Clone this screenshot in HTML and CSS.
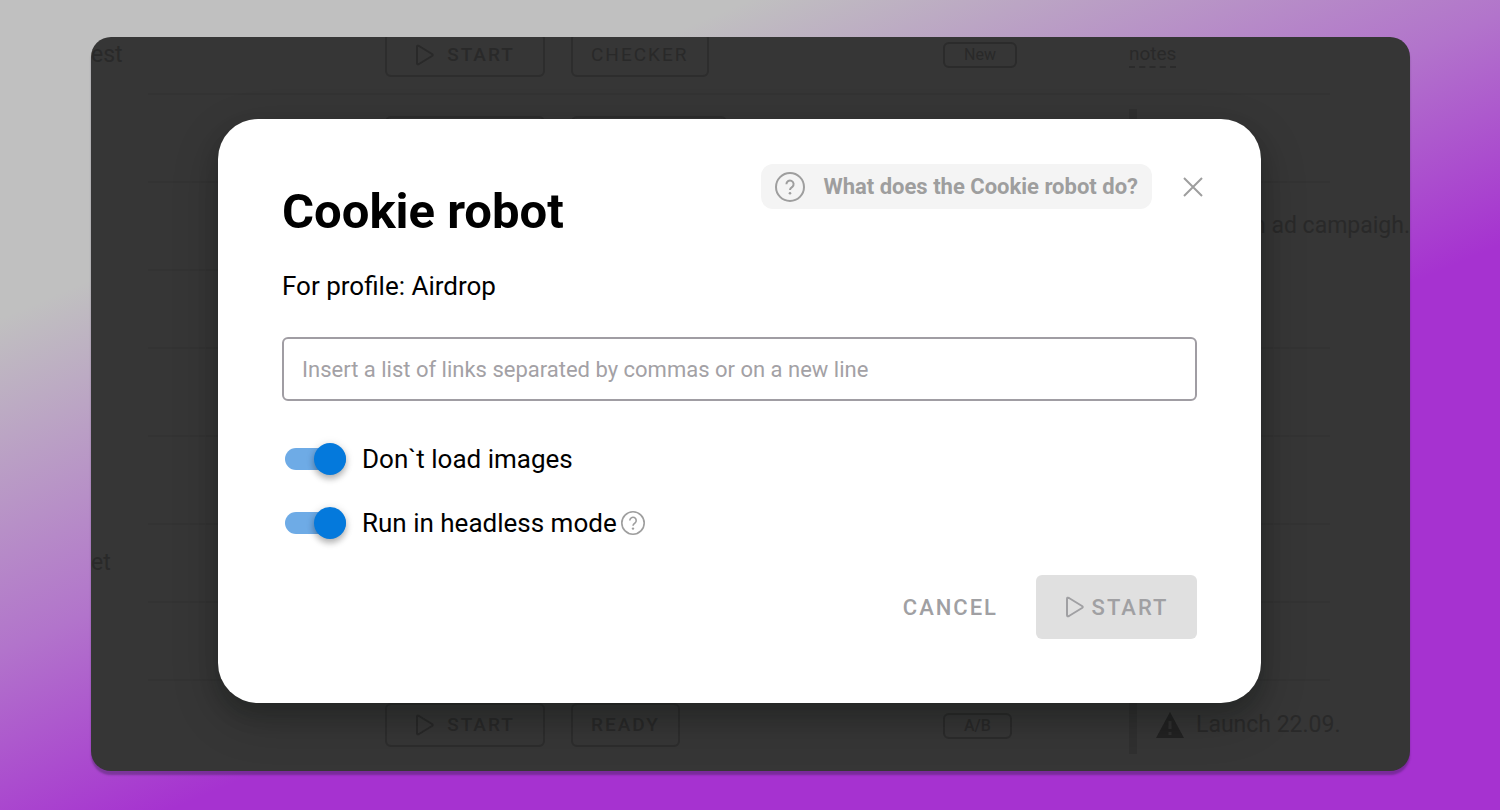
FILE: index.html
```html
<!DOCTYPE html>
<html lang="en">
<head>
<meta charset="utf-8">
<meta name="viewport" content="width=device-width, initial-scale=1">
<title>Cookie robot</title>
<link rel="stylesheet" href="styles.css">
</head>
<body>
<main class="window">
  <table class="profiles" aria-label="Profiles">
    <colgroup><col class="col-name"><col class="col-actions"><col class="col-tag"><col class="col-notes"><col class="col-end"></colgroup>
    <tbody>
      <tr class="short">
        <td>est</td>
        <td class="actions"><div class="pair">
          <span class="ghost ghost-start"><svg class="play" viewBox="0 0 20 22" aria-hidden="true"><path d="M2 3v16q0 2 2 1l13-8q1.500-1 0-2L4 2Q2 1 2 3z"/></svg>START</span>
          <span class="ghost thin">CHECKER</span></div></td>
        <td><span class="tag">New</span></td>
        <td><span class="notes-link">notes</span></td>
        <td></td>
      </tr>
      <tr>
        <td></td>
        <td class="actions"><div class="pair"><span class="ghost ghost-start"></span><span class="ghost ghost-wide"></span></div></td>
        <td></td>
        <td><div class="note"></div></td>
        <td></td>
      </tr>
      <tr>
        <td></td><td></td><td></td>
        <td colspan="2" class="campaign">n ad campaigh.</td>
      </tr>
      <tr class="short"><td></td><td></td><td></td><td></td><td></td></tr>
      <tr><td></td><td></td><td></td><td></td><td></td></tr>
      <tr><td></td><td></td><td></td><td></td><td></td></tr>
      <tr class="short"><td>et</td><td></td><td></td><td></td><td></td></tr>
      <tr class="short"><td></td><td></td><td></td><td></td><td></td></tr>
      <tr class="last">
        <td></td>
        <td class="actions"><div class="pair">
          <span class="ghost ghost-start"><svg class="play" viewBox="0 0 20 22" aria-hidden="true"><path d="M2 3v16q0 2 2 1l13-8q1.500-1 0-2L4 2Q2 1 2 3z"/></svg>START</span>
          <span class="ghost">READY</span></div></td>
        <td><span class="tag bold">A/B</span></td>
        <td><div class="note"><svg class="warning" viewBox="0 0 28 28" aria-hidden="true"><path d="M14 1L28 27H0z"/><path class="mark" d="M14 10v8M14 21v3"/></svg>Launch 22.09.</div></td>
        <td></td>
      </tr>
    </tbody>
  </table>

  <div class="overlay">
    <form class="dialog" role="dialog" aria-labelledby="title">
      <header class="head">
        <h1 id="title">Cookie robot</h1>
        <button type="button" class="help">
          <svg class="help-icon" viewBox="0 0 30 30" aria-hidden="true"><circle cx="15" cy="15" r="14"/><path d="M11.400 12.200a3.600 3.600 0 1 1 5.900 2.700c-1.400 1-2.300 1.500-2.300 3.100"/><circle class="dot" cx="15" cy="21.200" r="1.300"/></svg>
          What does the Cookie robot do?
        </button>
        <button type="button" class="close" aria-label="Close"><svg viewBox="0 0 20 20" aria-hidden="true"><path d="M1 1l18 18M19 1L1 19"/></svg></button>
      </header>
      <p class="profile">For profile: Airdrop</p>
      <input class="links" type="text" aria-label="Links" placeholder="Insert a list of links separated by commas or on a new line">
      <div class="options">
        <div class="option">
          <input class="switch" type="checkbox" id="images" checked>
          <label for="images">Don`t load images</label>
        </div>
        <div class="option">
          <input class="switch" type="checkbox" id="headless" checked>
          <label for="headless">Run in headless mode</label>
          <svg class="hint" viewBox="0 0 30 30" aria-hidden="true"><circle cx="15" cy="15" r="14"/><path d="M11 12a4 4 0 1 1 6.500 3c-1.500 1-2.500 1.700-2.500 3.500"/><circle class="dot" cx="15" cy="22" r="1.500"/></svg>
        </div>
      </div>
      <footer class="foot">
        <button type="button" class="cancel">CANCEL</button>
        <button type="submit" class="start" disabled><svg class="play" viewBox="0 0 20 22" aria-hidden="true"><path d="M2 3v16q0 2 2 1l13-8q1.500-1 0-2L4 2Q2 1 2 3z"/></svg>START</button>
      </footer>
    </form>
  </div>
</main>
</body>
</html>
```
FILE: styles.css
```css
* { box-sizing: border-box; }

body {
  margin: 0;
  min-height: 100vh;
  display: grid;
  padding: 37px 6% 39px;
  padding-left: 91px;
  font-family: Roboto, "Liberation Sans", sans-serif;
  font-size: 26px;
  color: #000;
  background: linear-gradient(157deg, #c0c0c0 22%, #b274cb 45%, #a632d0 61%);
}

button, input { font: inherit; }
svg { fill: none; stroke: currentColor; flex: none; }

.window {
  display: grid;
  overflow: hidden;
  border-radius: 20px;
  background: #363636;
  box-shadow: 0 4px 2px rgba(40, 30, 60, 0.35);
}

.profiles, .overlay { grid-area: 1 / 1; min-width: 0; }

/* Profile list, dimmed behind the dialog */
.profiles {
  width: 100%;
  margin-top: -21px;
  table-layout: fixed;
  border-collapse: collapse;
  color: #292929;
  font-size: 23px;
  line-height: 32px;
  white-space: nowrap;
}
.col-name { width: 57px; }
.col-tag { width: 186px; }
.col-notes { width: 201px; }
.col-end { width: 80px; }
.profiles tr { height: 88px; }
.profiles .short { height: 78px; }
.profiles .last { height: 90px; }
.profiles td { padding: 0; border-bottom: 2px solid #333; }
.profiles td:first-child, .profiles td:last-child, .profiles .last td { border-bottom-color: transparent; }
.profiles .actions { padding-left: 237px; }
.profiles .campaign { text-align: right; }

.pair { display: flex; gap: 26px; }
.ghost {
  display: flex;
  align-items: center;
  justify-content: center;
  height: 44px;
  padding: 0 18px;
  border: 2px solid #2d2d2d;
  border-radius: 6px;
  font-size: 19px;
  font-weight: 500;
  letter-spacing: 2px;
}
.ghost.thin { font-weight: 400; }
.ghost-start { width: 160px; gap: 12px; }
.ghost-wide { width: 156px; }
.play { width: 20px; height: 22px; stroke-width: 2; }
.tag {
  display: inline-block;
  padding: 0 19px;
  border: 2px solid #2b2b2b;
  border-radius: 6px;
  font-size: 16px;
  line-height: 22px;
  vertical-align: middle;
}
.tag.bold { font-weight: 500; }
.notes-link { border-bottom: 2px dashed #2b2b2b; font-size: 19px; line-height: 24px; display: block; width: max-content; }
.note {
  display: flex;
  align-items: center;
  gap: 12px;
  height: 58px;
  padding-left: 19px;
  border-left: 8px solid #303030;
}
.warning { width: 28px; height: 28px; fill: #222; stroke: none; }
.warning .mark { stroke: #303030; stroke-width: 3; }

/* Dialog */
.overlay { display: grid; padding: 82px 149px 68px 127px; }
.dialog {
  z-index: 1;
  display: flex;
  flex-direction: column;
  padding: 45px 64px 64px;
  border-radius: 40px;
  background: #fff;
  box-shadow: 0 16px 48px rgba(0, 0, 0, 0.2), 0 12px 20px rgba(10, 20, 15, 0.2);
}
.head { display: flex; align-items: flex-start; }
h1 { margin: 20px auto 0 0; font-size: 49px; font-weight: 700; line-height: 56px; }
.help {
  display: flex;
  align-items: center;
  gap: 18px;
  height: 45px;
  padding: 0 14px;
  border: 0;
  border-radius: 12px;
  background: #f4f4f4;
  color: #9e9e9e;
  font-size: 22px;
  font-weight: 700;
}
.help-icon { width: 30px; height: 30px; stroke-width: 2; }
.dot { fill: currentColor; stroke: none; }
.close {
  display: grid;
  place-items: center;
  width: 32px;
  height: 45px;
  margin: 0 -12px 0 25px;
  padding: 0;
  border: 0;
  background: none;
  color: #9e9e9e;
}
.close svg { width: 20px; height: 20px; stroke-width: 2; }
.profile { margin: 30px 0 0; line-height: 32px; }
.links {
  width: 100%;
  height: 64px;
  margin-top: 35px;
  padding: 0 18px;
  border: 2px solid #a09da3;
  border-radius: 6px;
  background: #fff;
  font-size: 22px;
}
.links::placeholder { color: #a3a1a5; opacity: 1; }
.options { display: grid; gap: 32px; margin: 42px 0 36px; }
.option { display: flex; align-items: center; line-height: 32px; }
.switch {
  appearance: none;
  display: flex;
  align-items: center;
  justify-content: flex-end;
  width: 61px;
  height: 22px;
  margin: 0 16px 0 3px;
  border-radius: 11px;
  background: #6eabe6;
}
.switch::before {
  content: "";
  width: 32px;
  height: 32px;
  flex: none;
  border-radius: 50%;
  background: #0479dc;
  box-shadow: 0 4px 6px rgba(0, 0, 0, 0.25), 0 1px 10px rgba(0, 0, 0, 0.12);
}
.switch:not(:checked) { justify-content: flex-start; }
.hint { width: 24px; height: 24px; margin-left: 4px; color: #9e9e9e; stroke-width: 2; }
.foot { display: flex; justify-content: flex-end; gap: 14px; }
.cancel, .start {
  display: flex;
  align-items: center;
  justify-content: center;
  height: 64px;
  padding: 0 24px;
  border: 0;
  border-radius: 6px;
  background: none;
  color: #a0a0a3;
  font-size: 22px;
  font-weight: 500;
  letter-spacing: 2px;
}
.start { gap: 7px; width: 161px; background: #e0e0e0; }
```
